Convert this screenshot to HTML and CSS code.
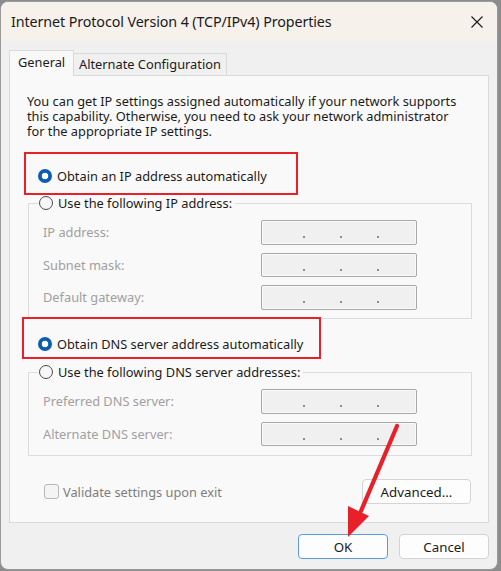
FILE: index.html
```
<!DOCTYPE html>
<html>
<head>
<meta charset="utf-8">
<link rel="stylesheet" href="styles.css">
</head>
<body>
<div class="window">
  <div class="titlebar">
    <span class="title">Internet Protocol Version 4 (TCP/IPv4) Properties</span>
    <svg class="close" width="12" height="12" viewBox="0 0 12 12"><path d="M0.5 0.5 L11.5 11.5 M11.5 0.5 L0.5 11.5" stroke="#1a1a1a" stroke-width="1.1" fill="none"/></svg>
  </div>
  <div class="body">
    <div class="tabs">
      <div class="tab active">General</div>
      <div class="tab">Alternate Configuration</div>
    </div>
    <div class="panel">
      <p class="intro">You can get IP settings assigned automatically if your network supports<br>this capability. Otherwise, you need to ask your network administrator<br>for the appropriate IP settings.</p>

      <div class="radio-row r1"><span class="radio on"></span><span>Obtain an IP address automatically</span></div>
      <fieldset class="group g1">
        <legend><span class="radio"></span><span>Use the following IP address:</span></legend>
        <div class="field"><span class="lbl">IP address:</span><div class="ip"><i></i><i></i><i></i></div></div>
        <div class="field"><span class="lbl">Subnet mask:</span><div class="ip"><i></i><i></i><i></i></div></div>
        <div class="field"><span class="lbl">Default gateway:</span><div class="ip"><i></i><i></i><i></i></div></div>
      </fieldset>

      <div class="radio-row r2"><span class="radio on"></span><span>Obtain DNS server address automatically</span></div>
      <fieldset class="group g2">
        <legend><span class="radio"></span><span>Use the following DNS server addresses:</span></legend>
        <div class="field"><span class="lbl">Preferred DNS server:</span><div class="ip"><i></i><i></i><i></i></div></div>
        <div class="field"><span class="lbl">Alternate DNS server:</span><div class="ip"><i></i><i></i><i></i></div></div>
      </fieldset>

      <div class="bottom-row">
        <div class="check"><span class="box"></span><span>Validate settings upon exit</span></div>
        <div class="btn adv">Advanced...</div>
      </div>
    </div>
    <div class="actions">
      <div class="btn ok">OK</div>
      <div class="btn">Cancel</div>
    </div>
  </div>
  <div class="mark m1"></div>
  <div class="mark m2"></div>
  <svg class="arrow" width="501" height="571" viewBox="0 0 501 571">
    <path d="M397 426 L361 511" stroke="#e8202a" stroke-width="4.2" stroke-linecap="round" fill="none"/>
    <path d="M348 506 L369 516 L348 537 Z" fill="#e8202a"/>
  </svg>
</div>
</body>
</html>
```
FILE: styles.css
```
* { box-sizing: border-box; }
html, body { margin: 0; padding: 0; }
body {
  width: 501px;
  height: 571px;
  background: #8c8c8c;
  font-family: "Noto Sans", "Open Sans", sans-serif;
  font-size: 12.8px;
  color: #1b1b1b;
  overflow: hidden;
}
.window {
  position: relative;
  margin-top: 1px;
  width: 498px;
  height: 569px;
  border: 1px solid #9a9a9a;
  border-radius: 8px;
  background: #f0f0f0;
  overflow: hidden;
}
.titlebar {
  height: 39px;
  background: #f7f1eb;
  display: flex;
  align-items: center;
  justify-content: space-between;
  padding: 0 14px 0 10px;
}
.title {
  font-size: 14.3px;
  color: #1a1a1a;
  letter-spacing: -0.1px;
  margin-top: -1px;
}
.body {
  padding: 9px 8px 0 8px;
}
.tabs {
  display: flex;
  align-items: flex-end;
  height: 25px;
  position: relative;
  z-index: 2;
}
.tab {
  height: 22px;
  line-height: 21px;
  padding: 0 5px;
  border: 1px solid #dadada;
  border-bottom: none;
  background: #f0f0f0;
  color: #1b1b1b;
  margin-left: -1px;
}
.tab.active {
  height: 26px;
  line-height: 23px;
  margin-left: 0;
  margin-bottom: -1px;
  padding: 0 8px;
  background: #f9f9f9;
  width: 65px;
  position: relative;
  z-index: 3;
}
.panel {
  border: 1px solid #dadada;
  background: #f9f9f9;
  padding: 18px 16px 18px 17px;
  height: 448px;
}
.intro {
  margin: 0;
  line-height: 15px;
  color: #1b1b1b;
  white-space: nowrap;
}
.radio-row, legend {
  display: flex;
  align-items: center;
  height: 16px;
  gap: 5px;
  color: #1b1b1b;
}
.radio {
  width: 14px;
  height: 14px;
  border-radius: 50%;
  border: 1px solid #4a4a4a;
  background: #f7f7f7;
  flex: none;
}
.radio.on {
  border: none;
  background: radial-gradient(circle, #ffffff 0 3px, #0a5fb4 3.6px);
}
.r1 { margin: 29px 0 0 11px; }
.r2 { margin: 17px 0 0 11px; }
.group {
  margin: 11px 0 0 1px;
  width: 444px;
  border: 1px solid #dcdcdc;
  padding: 9px 0 8.5px 14px;
  min-width: 0;
}
.g2 { margin-top: 12px; padding-bottom: 9px; }
legend {
  padding: 0 3px 0 1px;
  margin-left: -5px;
}
.field {
  display: flex;
  align-items: center;
  height: 24.5px;
}
.field + .field { margin-top: 8px; }
.lbl {
  width: 218px;
  color: #a0a0a0;
}
.ip {
  width: 156px;
  height: 100%;
  border: 1px solid #a8a8a8;
  border-radius: 2px;
  background: #f0f0f0;
  box-shadow: inset 0 0 0 1px #fafafa;
  display: flex;
  padding: 15px 0 0 41px;
  gap: 35px;
}
.ip i {
  display: block;
  width: 2px;
  height: 2px;
  background: #8e8aa6;
}
.bottom-row {
  margin-top: 23px;
  display: flex;
  justify-content: space-between;
  align-items: center;
  height: 25px;
}
.check {
  display: flex;
  align-items: center;
  gap: 4px;
  margin-left: 17px;
  color: #7e7e7e;
}
.box {
  width: 15px;
  height: 15px;
  border: 1px solid #b8b8b8;
  border-radius: 3px;
  background: #f4f4f4;
}
.btn {
  height: 25px;
  border: 1px solid #d4d4d4;
  border-radius: 4px;
  background: #fdfdfd;
  display: flex;
  align-items: center;
  justify-content: center;
  color: #1b1b1b;
  font-size: 13.3px;
}
.adv { width: 109px; margin-right: 1px; }
.actions {
  display: flex;
  justify-content: flex-end;
  gap: 11px;
  margin-top: 11px;
}
.actions .btn { width: 90px; }
.ok { border: 1.5px solid #5b9bd8; }
.mark {
  position: absolute;
  border: 2.5px solid #e8202a;
}
.m1 { left: 23px; top: 150px; width: 274px; height: 43px; }
.m2 { left: 21px; top: 315px; width: 299px; height: 42px; }
.arrow {
  position: absolute;
  left: -1px;
  top: -2px;
  pointer-events: none;
}
```
